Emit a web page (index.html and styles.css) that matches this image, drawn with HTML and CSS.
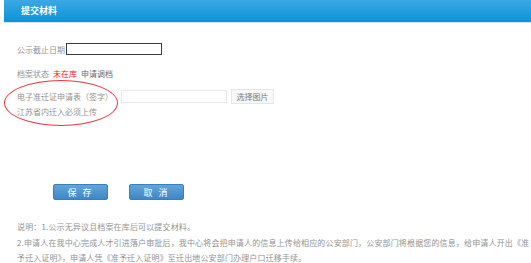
FILE: index.html
```html
<html lang="zh-CN"><head>
    <meta charset="UTF-8">
    <title>提交材料</title>
    <link rel="stylesheet" href="styles.css">
  </head>
  <body>
    <main class="page">
      <section class="header">提交材料</section>
      <section class="form">
        <div class="row row-date">
          <span class="label">公示截止日期</span>
          <input class="date-input" type="text">
        </div>
        <div class="row row-status">
          <span class="label">档案状态</span>
          <span class="status-red">未在库</span>
          <span class="status-link">申请调档</span>
        </div>
        <div class="upload">
          <div class="row row-upload">
            <span class="label">电子准迁证申请表（签字）</span>
            <input class="file-input" type="text">
            <button class="pick">选择图片</button>
          </div>
          <div class="row row-hint">江苏省内迁入必须上传</div>
          <div class="circle"></div>
        </div>
        <div class="actions">
          <button class="btn">保 存</button>
          <button class="btn">取 消</button>
        </div>
        <div class="notes">
          <p>说明：1.公示无异议且档案在库后可以提交材料。</p>
          <p>2.申请人在我中心完成人才引进落户审批后，我中心将会把申请人的信息上传给相应的公安部门，公安部门将根据您的信息，给申请人开出《准予迁入证明》，申请人凭《准予迁入证明》至迁出地公安部门办理户口迁移手续。</p>
        </div>
      </section>
    </main>
  </body>
</html>
```

FILE: styles.css
```css
* {
    margin: 0;
    padding: 0;
    box-sizing: border-box;
}
body {
    background: #fff;
    font-family: "Noto Sans CJK SC", "Noto Sans", sans-serif;
    font-size: 8px;
    color: #929292;
}
.page {
    padding-left: 4px;
}
.header {
    height: 23px;
    line-height: 22px;
    padding-left: 17px;
    background: linear-gradient(#3ca7e4, #0b93da);
    border-bottom: 1px solid #d6e3ec;
    color: #fff;
    font-size: 9px;
    font-weight: bold;
}
.form {
    padding: 20px 0 0 13px;
}
.row {
    display: flex;
    align-items: center;
    height: 12px;
}
.date-input {
    width: 96px;
    height: 12px;
    border: 1px solid #3a3a3a;
    margin-left: 1px;
    outline: none;
}
.row-status {
    margin-top: 12px;
}
.status-red {
    color: #f01818;
    margin-left: 4px;
}
.status-link {
    color: #6a6a6a;
    margin-left: 4px;
}
.upload {
    position: relative;
    margin-top: 10px;
}
.row-upload {
    height: 14px;
}
.file-input {
    width: 106px;
    height: 13px;
    border: 1px solid #e8e8e8;
    margin-left: 8px;
    outline: none;
}
.pick {
    width: 43px;
    height: 15px;
    margin-left: 4px;
    border: 1px solid #e6e6e6;
    background: #f8f8f8;
    color: #777;
    font-family: inherit;
    font-size: 8px;
}
.row-hint {
    margin-top: 2px;
    height: 13px;
}
.circle {
    position: absolute;
    left: -13px;
    top: -9px;
    width: 114px;
    height: 46px;
    border: 1px solid #e8373c;
    border-radius: 50%;
}
.actions {
    display: flex;
    gap: 21px;
    margin-top: 66px;
    padding-left: 36px;
}
.btn {
    width: 55px;
    height: 16px;
    border: 1px solid #3a7fbc;
    border-radius: 2px;
    background: linear-gradient(#62a5dc, #3f86c5);
    color: #fff;
    font-family: inherit;
    font-size: 9px;
    letter-spacing: 2px;
}
.notes {
    margin-top: 19px;
    line-height: 15.5px;
    letter-spacing: 0.15px;
}
```
